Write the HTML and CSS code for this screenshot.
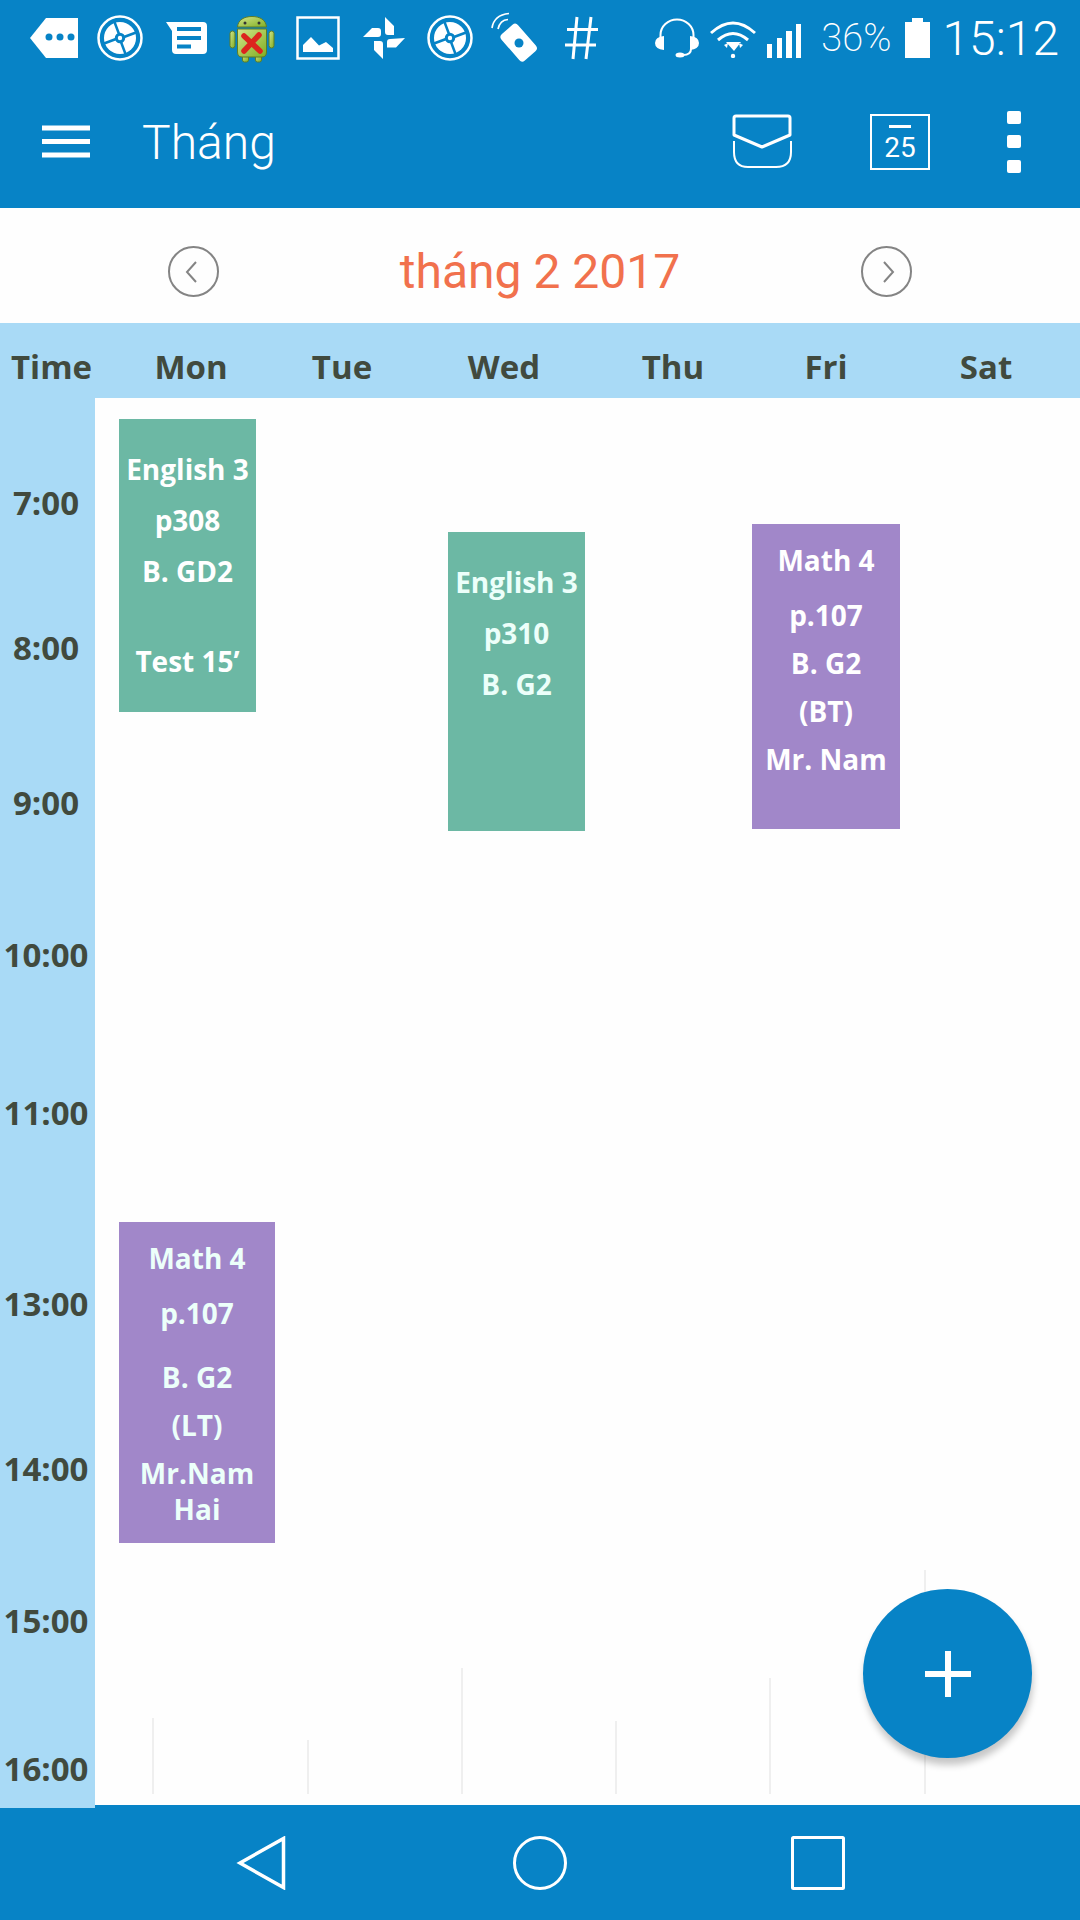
FILE: index.html
```html
<!DOCTYPE html>
<html lang="vi">
<head>
<meta charset="utf-8">
<meta name="viewport" content="width=device-width, initial-scale=1">
<title>Tháng</title>
<link rel="stylesheet" href="styles.css">
</head>
<body>
<div class="screen">
  <div class="status-bar">
    <div class="status-group">
      <svg class="status-icon" viewBox="0 0 66 76" aria-hidden="true"><path d="M9 38 25 18H57V58H25Z" fill="#fff"/><g fill="#0783c6"><circle cx="28" cy="37" r="3.5"/><circle cx="39" cy="37" r="3.5"/><circle cx="50" cy="37" r="3.5"/></g></svg>
      <svg class="status-icon" viewBox="0 0 66 76" aria-hidden="true"><g id="wheel"><circle cx="33" cy="38" r="21.5" fill="none" stroke="#fff" stroke-width="2.5"/><circle cx="33" cy="38" r="16" fill="#fff"/><path d="M27.500 22 32 34M49 32.500 37 37M38.500 54 34 42M17 43.500 29 39" stroke="#0783c6" stroke-width="2.500"/><circle cx="33" cy="38" r="3.700" fill="#fff" stroke="#0783c6" stroke-width="3"/></g></svg>
      <svg class="status-icon" viewBox="0 0 66 76" aria-hidden="true"><path d="M13 22H50Q54 22 54 26V50Q54 54 50 54H23Q19 54 19 50V31Z" fill="#fff"/><path d="M24 29H48M24 38H48M24 46.500H38" stroke="#0783c6" stroke-width="4"/></svg>
      <svg class="status-icon" viewBox="0 0 66 76" aria-hidden="true"><defs><linearGradient id="droid" x1="0" y1="0" x2="1" y2="1"><stop offset="0" stop-color="#d3e58a"/><stop offset="1" stop-color="#7fae23"/></linearGradient></defs><g fill="url(#droid)" stroke="#5d7d27"><path d="M18.500 27C19 20 25 16.500 33 16.500S47 20 47.500 27Z"/><rect x="23.500" y="53" width="6" height="9" rx="2"/><rect x="36.500" y="53" width="6" height="9" rx="2"/><rect x="11" y="31" width="5" height="17" rx="2.500"/><rect x="50" y="31" width="5" height="17" rx="2.500"/><path d="M18.500 29H47.500V52Q47.500 57 43 57H23Q18.500 57 18.500 52Z"/></g><circle cx="26" cy="23" r="1.500" fill="#333"/><circle cx="40" cy="23" r="1.500" fill="#333"/><path d="M25 36 41 51M40 35 25 51" stroke="#dc241e" stroke-width="5.500" stroke-linecap="round"/></svg>
      <svg class="status-icon" viewBox="0 0 66 76" aria-hidden="true"><path d="M12.500 17.500H53.500V58.500H12.500Z" fill="none" stroke="#fff" stroke-width="2.500"/><path d="M18 52V45L26 37 34 45.500 41 42 48 48V52Z" fill="#fff"/></svg>
      <svg class="status-icon" viewBox="0 0 66 76" aria-hidden="true"><path d="M34 17 43 26V35H37Q34 35 34 32ZM54 38 45 47.500H36V42Q36 39 39 39ZM32 59 23 50V41H29Q32 41 32 44ZM12 37 21 28H27Q30 28 30 31V34Q30 37 27 37Z" fill="#fff"/></svg>
      <svg class="status-icon" viewBox="0 0 66 76" aria-hidden="true"><use href="#wheel"/></svg>
      <svg class="status-icon" viewBox="0 0 66 76" aria-hidden="true"><rect x="25" y="25" width="22" height="35" rx="4" transform="rotate(-41 36 43)" fill="#fff"/><circle cx="36" cy="43" r="4.500" fill="#0783c6"/><path d="M9 28Q11 15 26 13.500M15 29Q17 20 25 19.500" fill="none" stroke="#fff" stroke-width="1.700"/></svg>
      <svg class="status-icon" viewBox="0 0 66 76" aria-hidden="true"><path d="M28 17 24 59M42 17 37 59M18 29.500H49M16 45H47" fill="none" stroke="#fff" stroke-width="3"/></svg>
    </div>
    <div class="status-group status-group--system">
      <svg class="icon-headset" viewBox="0 0 44 40" aria-hidden="true"><path d="M5.500 20V17A16.500 15.500 0 0 1 38.500 17V20M36 31Q36 37 28 37" fill="none" stroke="#fff" stroke-width="2"/><path d="M9 18V32Q0 31 0 25T9 18ZM35 18V32Q44 31 44 25T35 18Z" fill="#fff"/><ellipse cx="25" cy="37" rx="4.500" ry="2.500" fill="#fff"/></svg>
      <svg class="icon-wifi" viewBox="0 0 46 40" aria-hidden="true"><path d="M1 15Q23-5 45 15M8 22Q23 9 38 22" fill="none" stroke="#fff" stroke-width="3"/><path d="M16 24H31L24 33ZM14 27 18 25 17 30ZM33 27 29 25 30 30Z" fill="#fff"/><circle cx="23" cy="38" r="2.200" fill="#fff"/></svg>
      <svg class="icon-signal" viewBox="0 0 34 40" aria-hidden="true"><path d="M0 26H5V40H0ZM10 20H15V40H10ZM19 13H25V40H19ZM29 6H34V40H29Z" fill="#fff"/></svg>
      <span class="battery-level">36%</span>
      <svg class="icon-battery" viewBox="0 0 25 40" aria-hidden="true"><path d="M7 0H18V4H25V40H0V4H7Z" fill="#fff"/></svg>
      <span class="clock">15:12</span>
    </div>
  </div>

  <header class="app-bar">
    <button class="icon-button" type="button" aria-label="Menu"><svg width="48" height="48" viewBox="0 0 48 48"><path d="M0 10H48M0 23.500H48M0 37H48" stroke="#fff" stroke-width="5"/></svg></button>
    <h1 class="app-title">Tháng</h1>
    <div class="app-actions">
      <button class="icon-button" type="button" aria-label="Mail"><svg width="62" height="56" viewBox="0 0 62 56" fill="none" stroke="#fff"><path d="M4 2H56Q58 2 58 4V21L30 33 2 21V4Q2 2 4 2Z" stroke-width="3" stroke-linejoin="round"/><path d="M2 27V38Q2 53 16 53H44Q59 53 59 38V27" stroke-width="2"/></svg></button>
      <button class="today-button" type="button" aria-label="25">25</button>
      <button class="icon-button" type="button" aria-label="More"><svg width="16" height="64" viewBox="0 0 16 64" fill="#fff"><rect x="1" y="1" width="14" height="13" rx="2"/><rect x="1" y="25" width="14" height="13" rx="2"/><rect x="1" y="50" width="14" height="13" rx="2"/></svg></button>
    </div>
  </header>

  <nav class="month-nav">
    <button class="round-button" type="button" aria-label="Previous month"><svg width="24" height="24" viewBox="0 0 24 24"><path d="M14 2 5 12 14 22" fill="none" stroke="#848484" stroke-width="2"/></svg></button>
    <h2 class="month-title">tháng 2 2017</h2>
    <button class="round-button" type="button" aria-label="Next month"><svg width="24" height="24" viewBox="0 0 24 24"><path d="M9 2 18 12 9 22" fill="none" stroke="#848484" stroke-width="2"/></svg></button>
  </nav>

  <div class="week-header">
    <span class="week-time">Time</span>
    <div class="week-days"><span>Mon</span><span>Tue</span><span>Wed</span><span>Thu</span><span>Fri</span><span>Sat</span></div>
  </div>

  <main class="schedule">
    <div class="grid-lines" aria-hidden="true">
      <i style="height:76px"></i><i style="height:54px"></i><i style="height:126px"></i><i style="height:73px"></i><i style="height:116px"></i><i style="height:224px"></i>
    </div>
    <div class="hours">
      <span>7:00</span><span>8:00</span><span>9:00</span><span>10:00</span><span>11:00</span><span>13:00</span><span>14:00</span><span>15:00</span><span>16:00</span>
    </div>
    <div class="days">
      <section class="day">
        <article class="event event--english" style="margin-top:21px;height:293px">
          <p>English 3</p><p>p308</p><p>B. GD2</p><p class="note">Test 15’</p>
        </article>
        <article class="event event--math event--wide event--tint" style="margin-top:510px;height:321px">
          <p>Math 4</p><p class="room">p.107</p><p class="building">B. G2</p><p>(LT)</p><p>Mr.Nam Hai</p>
        </article>
      </section>
      <section class="day"></section>
      <section class="day">
        <article class="event event--english event--tint" style="margin-top:134px;height:299px">
          <p>English 3</p><p>p310</p><p>B. G2</p>
        </article>
      </section>
      <section class="day"></section>
      <section class="day">
        <article class="event event--math" style="margin-top:126px;height:305px">
          <p>Math 4</p><p class="room">p.107</p><p>B. G2</p><p>(BT)</p><p>Mr. Nam</p>
        </article>
      </section>
      <section class="day"></section>
    </div>
    <button class="add-button" type="button" aria-label="Add"><svg width="46" height="46" viewBox="0 0 46 46"><path d="M23 0V46M0 23H46" stroke="#fff" stroke-width="6"/></svg></button>
  </main>

  <nav class="system-nav">
    <button class="icon-button" type="button" aria-label="Back"><svg width="54" height="54" viewBox="0 0 54 54"><path d="M48.500 2.500V51.500L5 27Z" fill="none" stroke="#fff" stroke-width="3.500"/></svg></button>
    <button class="icon-button" type="button" aria-label="Home"><svg width="54" height="54" viewBox="0 0 54 54"><circle cx="27" cy="27" r="25.500" fill="none" stroke="#fff" stroke-width="3"/></svg></button>
    <button class="icon-button" type="button" aria-label="Recent"><svg width="54" height="54" viewBox="0 0 54 54"><rect x="1.500" y="1.500" width="51" height="51" rx="1" fill="none" stroke="#fff" stroke-width="3"/></svg></button>
  </nav>
</div>
</body>
</html>
```
FILE: styles.css
```css
* { box-sizing: border-box; }

body {
  margin: 0;
  background: #fefefe;
  font-family: "Open Sans", "Noto Sans", sans-serif;
}

h1, h2, p { margin: 0; }

button {
  padding: 0;
  border: 0;
  background: none;
  color: inherit;
  font: inherit;
  cursor: pointer;
}

svg { display: block; }

.screen {
  display: flex;
  flex-direction: column;
  min-height: 100vh;
}

.icon-button { flex: none; }

/* Status bar */
.status-bar {
  display: flex;
  justify-content: space-between;
  align-items: center;
  height: 76px;
  padding: 0 21px;
  background: #0783c6;
  color: #fff;
  font-family: Roboto, sans-serif;
}

.status-group { display: flex; }

.status-icon { width: 66px; height: 76px; }

.status-group--system { align-items: center; }

.icon-headset { width: 44px; height: 40px; margin-right: 11px; }
.icon-wifi { width: 46px; height: 40px; margin-right: 11px; }
.icon-signal { width: 34px; height: 40px; margin-right: 20px; }
.icon-battery { width: 25px; height: 40px; margin-right: 12px; }

.battery-level {
  margin-right: 14px;
  font-size: 38px;
  font-weight: 200;
}

.clock {
  font-size: 48px;
  font-weight: 300;
}

/* App bar */
.app-bar {
  display: flex;
  align-items: center;
  height: 132px;
  padding: 0 58px 0 42px;
  background: #0783c6;
  color: #fff;
  font-family: Roboto, sans-serif;
}

.app-title {
  margin-left: 52px;
  font-size: 48px;
  font-weight: 300;
}

.app-actions {
  display: flex;
  align-items: center;
  gap: 76px;
  margin-left: auto;
}

.today-button {
  position: relative;
  width: 60px;
  height: 56px;
  padding-top: 12px;
  border: 2px solid #fff;
  font-size: 28px;
  line-height: 36px;
}

.today-button::before {
  content: "";
  position: absolute;
  top: 9px;
  left: 17px;
  width: 22px;
  height: 3px;
  background: #fff;
}

/* Month switcher */
.month-nav {
  display: flex;
  justify-content: space-between;
  align-items: center;
  height: 115px;
  padding: 12px 168px 0;
}

.month-title {
  color: #f1714d;
  font-family: Roboto, sans-serif;
  font-size: 48px;
  font-weight: 400;
}

.round-button {
  display: flex;
  justify-content: center;
  align-items: center;
  width: 51px;
  height: 51px;
  border: 2px solid #848484;
  border-radius: 50%;
}

/* Week header */
.week-header {
  display: flex;
  align-items: center;
  height: 75px;
  padding-top: 12px;
  background: #a9daf6;
  color: #414a3e;
  font-size: 33px;
  font-weight: 700;
  text-align: center;
}

.week-time { width: 103px; }

.week-days {
  display: grid;
  flex: 1;
  grid-template-columns: 160fr 142fr 182fr 156fr 150fr 170fr;
  padding: 0 9px 0 8px;
}

/* Schedule */
.schedule {
  position: relative;
  display: flex;
  flex: 1;
}

.hours {
  position: relative;
  z-index: 1;
  display: grid;
  flex: none;
  grid-template-rows: 145px 155px 152px 158px 191px 165px 152px 148px 1fr;
  width: 95px;
  margin-bottom: -3px;
  padding: 82px 3px 0 0;
  background: #a9daf6;
  color: #414a3e;
  font-size: 33px;
  font-weight: 700;
  line-height: 46px;
  text-align: center;
}

.days {
  display: grid;
  flex: 1;
  grid-template-columns: 165fr 164fr 152fr 152fr 152fr 176fr;
  padding-left: 24px;
}

.day {
  display: flex;
  flex-direction: column;
  align-items: flex-start;
}

.event {
  width: 137px;
  color: #fff;
  font-size: 28px;
  font-weight: 700;
  line-height: 36px;
  text-align: center;
}

.event--english { padding-top: 32px; background: #6cb8a4; }
.event--math { width: 148px; padding-top: 18px; background: #a187c9; }
.event--wide { width: 156px; padding-right: 20px; padding-left: 20px; }
.event--tint { color: #ecfffa; }

.event--english p + p { margin-top: 15px; }
.event--math p + p { margin-top: 12px; }
.event--math p + .room { margin-top: 19px; }
.event--math p + .building { margin-top: 28px; }
.event--english p + .note { margin-top: 54px; }

.grid-lines {
  position: absolute;
  right: 0;
  bottom: 11px;
  left: 0;
  display: grid;
  grid-template-columns: repeat(7, 1fr);
  align-items: end;
}

.grid-lines i { border-right: 2px solid #efefef; }

.add-button {
  position: absolute;
  right: 48px;
  bottom: 47px;
  display: flex;
  justify-content: center;
  align-items: center;
  width: 169px;
  height: 169px;
  border-radius: 50%;
  background: #0783c6;
  box-shadow: 1px 7px 7px rgba(0, 0, 0, 0.22);
}

/* System navigation */
.system-nav {
  display: flex;
  justify-content: space-between;
  align-items: center;
  height: 115px;
  padding: 0 235px;
  background: #0783c6;
}
```
